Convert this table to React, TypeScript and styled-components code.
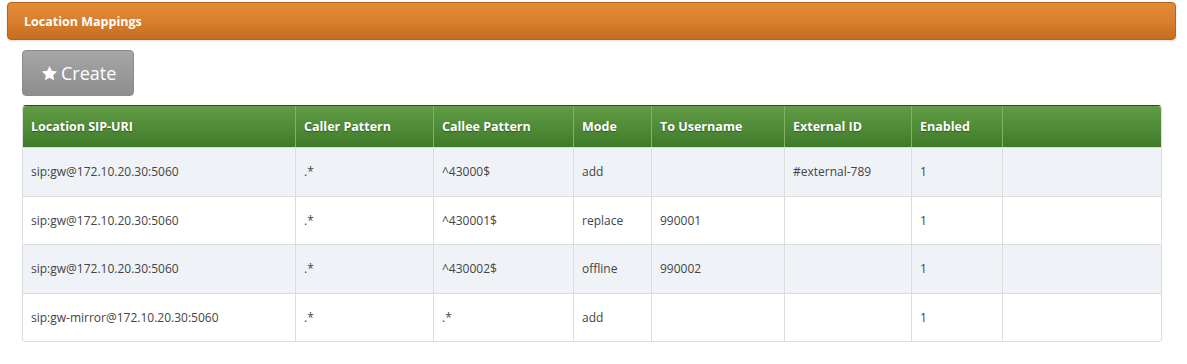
import React from 'react';
import styled, { createGlobalStyle } from 'styled-components';

const GlobalStyle = createGlobalStyle`
    body {
        margin: 0;
        background: #fff;
        font-family: "Open Sans", "Liberation Sans", sans-serif;
    }
`;

const Page = styled.div`
    padding: 2px 11px 0 7px;
    width: 1187px;
    box-sizing: border-box;
`;

const PanelHeader = styled.div`
    height: 38px;
    box-sizing: border-box;
    display: flex;
    align-items: center;
    padding-left: 16px;
    border: 1px solid #b5621a;
    border-radius: 4px;
    background: linear-gradient(to bottom, #e38b38 0%, #d97f2e 50%, #c46e20 100%);
    box-shadow: 0 1px 2px rgba(0, 0, 0, 0.15);
    color: #fff;
    font-size: 12.5px;
    font-weight: 700;
`;

const Body = styled.div`
    padding: 10px 14px 0 15px;
`;

const CreateButton = styled.button`
    display: flex;
    align-items: center;
    gap: 3px;
    height: 46px;
    width: 112px;
    padding: 0 0 0 18px;
    border: 1px solid #8a8a8a;
    border-radius: 4px;
    background: linear-gradient(to bottom, #a6a6a6 0%, #8e8e8e 100%);
    color: #fff;
    font-family: "Open Sans", "Liberation Sans", sans-serif;
    font-size: 18px;
    cursor: pointer;
`;

const Table = styled.table`
    margin-top: 9px;
    width: 1140px;
    border-collapse: separate;
    border-spacing: 0;
    border: 1px solid #dcdcdc;
    border-top: 1px solid #2f4f22;
    border-radius: 4px;
    overflow: hidden;
    table-layout: fixed;
    font-size: 12px;
`;

const HeadCell = styled.th<{ $w?: number }>`
    box-sizing: border-box;
    width: ${p => (p.$w ? `${p.$w}px` : 'auto')};
    height: 41px;
    padding: 0 8px;
    text-align: left;
    font-size: 12.5px;
    font-weight: 700;
    color: #fff;
    text-shadow: 0 1px 1px rgba(0, 0, 0, 0.35);
    background: linear-gradient(to bottom, #619b45 0%, #4f8a36 55%, #3f7a2b 100%);
    border-left: 1px solid #7fb363;
    &:first-child {
        border-left: none;
    }
`;

const Row = styled.tr<{ $odd: boolean }>`
    background: ${p => (p.$odd ? '#eff2f7' : '#fff')};
`;

const Cell = styled.td`
    box-sizing: border-box;
    height: 48.5px;
    padding: 0 8px;
    color: #444;
    border-top: 1px solid #dcdcdc;
    border-left: 1px solid #dcdcdc;
    &:first-child {
        border-left: none;
    }
`;

const StarIcon = () => (
    <svg width="17" height="17" viewBox="0 0 24 24">
        <path fill="#fff" d="M12 1.5l3.2 6.7 7.3 1-5.3 5.1 1.3 7.3L12 18.1l-6.5 3.5 1.3-7.3-5.3-5.1 7.3-1z" />
    </svg>
);

const columns = [
    { title: 'Location SIP-URI', w: 272 },
    { title: 'Caller Pattern', w: 138 },
    { title: 'Callee Pattern', w: 140 },
    { title: 'Mode', w: 78 },
    { title: 'To Username', w: 133 },
    { title: 'External ID', w: 127 },
    { title: 'Enabled', w: 91 },
    { title: '' },
];

const rows = [
    ['sip:gw@172.10.20.30:5060', '.*', '^43000$', 'add', '', '#external-789', '1', ''],
    ['sip:gw@172.10.20.30:5060', '.*', '^430001$', 'replace', '990001', '', '1', ''],
    ['sip:gw@172.10.20.30:5060', '.*', '^430002$', 'offline', '990002', '', '1', ''],
    ['sip:gw-mirror@172.10.20.30:5060', '.*', '.*', 'add', '', '', '1', ''],
];

const App = () => {
    return (
        <Page>
            <GlobalStyle />
            <PanelHeader>Location Mappings</PanelHeader>
            <Body>
                <CreateButton>
                    <StarIcon />
                    Create
                </CreateButton>
                <Table>
                    <thead>
                        <tr>
                            {columns.map((c, i) => (
                                <HeadCell key={i} $w={c.w}>{c.title}</HeadCell>
                            ))}
                        </tr>
                    </thead>
                    <tbody>
                        {rows.map((r, i) => (
                            <Row key={i} $odd={i % 2 === 0}>
                                {r.map((v, j) => (
                                    <Cell key={j}>{v}</Cell>
                                ))}
                            </Row>
                        ))}
                    </tbody>
                </Table>
            </Body>
        </Page>
    );
};

export default App;
